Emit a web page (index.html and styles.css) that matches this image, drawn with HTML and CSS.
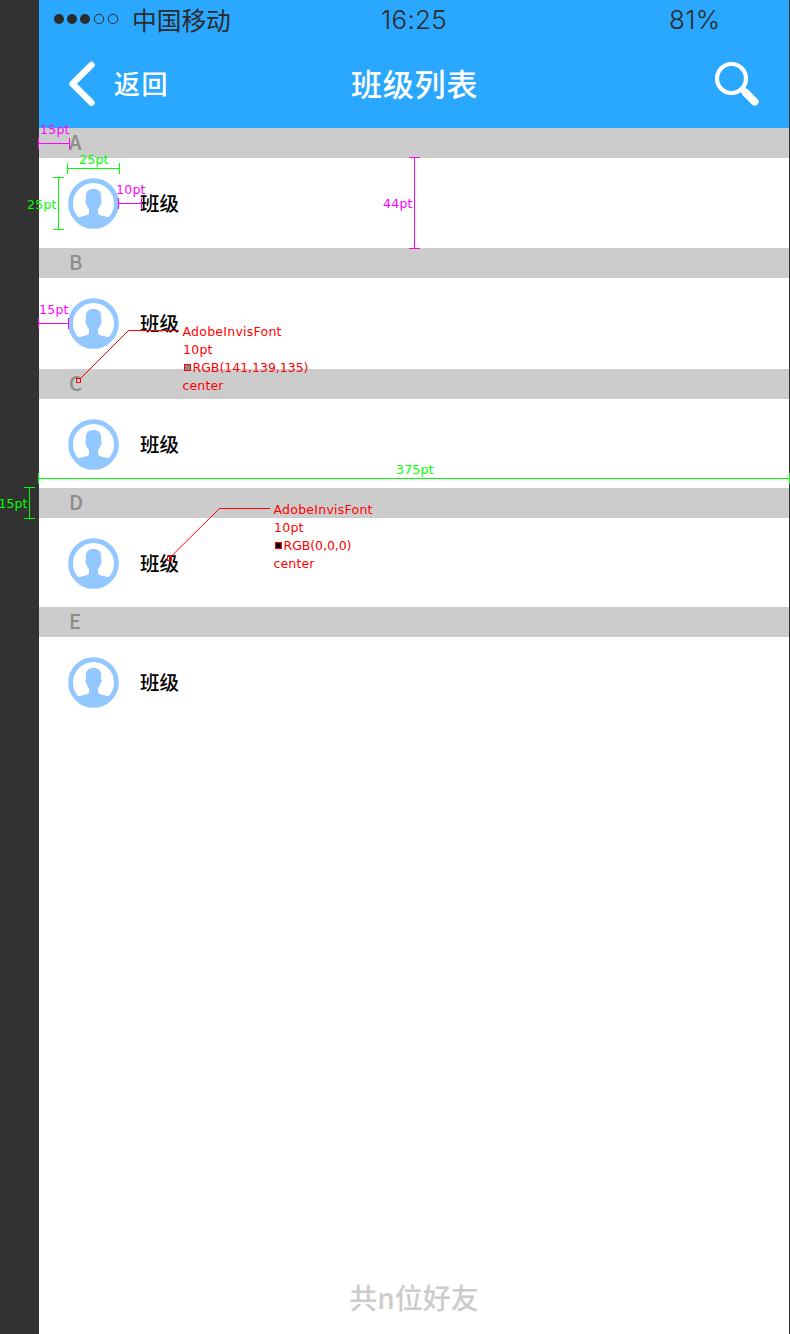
FILE: index.html
```html
<!DOCTYPE html>
<html lang="zh-CN">
<head>
<meta charset="utf-8">
<title>班级列表</title>
<link rel="stylesheet" href="styles.css">
</head>
<body>
<svg class="defs" width="0" height="0" aria-hidden="true">
  <symbol id="avatar" viewBox="0.500 0.500 52 52">
    <circle cx="26" cy="26" r="22.900" fill="#fff" stroke="#93c7ff" stroke-width="4.800"/>
    <path fill="#93c7ff" d="M26 11.500c-5 0-8 3-7.600 7.500v3.600c-.9.2-.8 3.600.5 4 .5 2.500 1.600 4 2.600 5V36c-.5 2-6.500 2.900-12 4.300A23 23 0 0 0 42.500 40.300C37 38.900 31 38 30.500 36v-4.400c1-1 2.100-2.500 2.600-5 1.300-.4 1.400-3.800.5-4V19c.4-4.500-2.600-7.500-7.600-7.500Z"/>
    <path fill="#93c7ff" d="M9.500 40.200Q26 36 42.500 40.200 36 49 26 49T9.500 40.200Z"/>
  </symbol>
</svg>
<main class="screen">
  <header class="header">
    <div class="status">
      <svg class="signal" width="66" height="14" viewBox="0 0 66 14">
        <g fill="#2b2b2b"><circle cx="6" cy="7" r="5"/><circle cx="19" cy="7" r="5"/><circle cx="32" cy="7" r="5"/></g>
        <g fill="none" stroke="#2b2b2b"><circle cx="46" cy="7" r="4.700"/><circle cx="60" cy="7" r="4.700"/></g>
      </svg>
      <span class="carrier">中国移动</span>
      <span class="time">16:25</span>
      <span class="battery">81%</span>
    </div>
    <nav class="navbar">
      <svg class="back-icon" width="28" height="46" viewBox="0 0 28 46"><path d="M23.500 4 4.500 22.800l19 19" fill="none" stroke="#fff" stroke-width="6.400" stroke-linecap="round" stroke-linejoin="round"/></svg>
      <span class="back">返回</span>
      <h1 class="title">班级列表</h1>
      <svg class="search-icon" width="48" height="48" viewBox="0 0 48 48"><g fill="none" stroke="#fff"><circle cx="18.500" cy="18.500" r="14.500" stroke-width="4.200"/><path d="m29 29 4 4" stroke-width="6.500"/><path d="m33 33 8.700 8.700" stroke-width="7.800" stroke-linecap="round"/></g></svg>
    </nav>
  </header>
  <section class="group"><h2 class="letter">A</h2><div class="row"><svg class="avatar"><use href="#avatar"/></svg><span>班级</span></div></section>
  <section class="group tall"><h2 class="letter">B</h2><div class="row"><svg class="avatar"><use href="#avatar"/></svg><span>班级</span></div></section>
  <section class="group short"><h2 class="letter">C</h2><div class="row"><svg class="avatar"><use href="#avatar"/></svg><span>班级</span></div></section>
  <section class="group short"><h2 class="letter">D</h2><div class="row"><svg class="avatar"><use href="#avatar"/></svg><span>班级</span></div></section>
  <section class="group"><h2 class="letter">E</h2><div class="row"><svg class="avatar"><use href="#avatar"/></svg><span>班级</span></div></section>
  <footer class="footer">共n位好友</footer>
</main>
<svg class="notes" width="790" height="1334" viewBox="0 0 790 1334">
  <g class="magenta">
    <path d="M38.500 138v11M38.500 143.500h31M69.500 138v11M118.500 198v11M118.500 203.500h23M141.500 198v11M38.500 318v11M38.500 323.500h30M68.500 318v11M409 157.500h11M414.500 157.500v91M409 248.500h11"/>
    <text x="40" y="134" textLength="29.500">15pt</text>
    <text x="116" y="194" textLength="29.500">10pt</text>
    <text x="39" y="314" textLength="29.500">15pt</text>
    <text x="383" y="208" textLength="29.500">44pt</text>
  </g>
  <g class="green">
    <path d="M67.500 163v11M67.500 168.500h52M119.500 163v11M53 177.500h11M58.500 177.500v52M53 229.500h11M38.500 473v11M38.500 478.500h751M789.500 473v11M24 487.500h11M29.500 487.500v31M24 518.500h11"/>
    <text x="79" y="164" textLength="29.500">25pt</text>
    <text x="27" y="209" textLength="29.500">25pt</text>
    <text x="396" y="474" textLength="37.500">375pt</text>
    <text x="-1.500" y="508" textLength="29">15pt</text>
  </g>
  <g class="red">
    <path d="M80 379 128.500 330.500H179M171 556.500 219.500 508.500H270"/>
    <rect x="76.500" y="378.500" width="4" height="4"/>
    <rect x="167.500" y="556.500" width="4" height="4"/>
    <rect x="184.500" y="364.500" width="6" height="6" fill="#8d8b87"/>
    <rect x="275.500" y="542.500" width="6" height="6" fill="#000"/>
    <text x="182.500" y="336" textLength="99">AdobeInvisFont</text>
    <text x="183" y="354" textLength="29.500">10pt</text>
    <text x="192.500" y="372" textLength="116">RGB(141,139,135)</text>
    <text x="182.500" y="390" textLength="41">center</text>
    <text x="273.500" y="514" textLength="99">AdobeInvisFont</text>
    <text x="274" y="532" textLength="29.500">10pt</text>
    <text x="283.500" y="550" textLength="68">RGB(0,0,0)</text>
    <text x="273.500" y="568" textLength="41">center</text>
  </g>
</svg>
</body>
</html>
```
FILE: styles.css
```css
* { box-sizing: border-box; }
body {
  margin: 0;
  position: relative;
  width: 790px;
  height: 1334px;
  overflow: hidden;
  padding: 0 1px 0 39px;
  background: #323232;
  font-family: "Noto Sans CJK SC", sans-serif;
}
.defs { display: none; }
.screen {
  display: flex;
  flex-direction: column;
  width: 750px;
  height: 1334px;
  background: #fff;
}
.header { height: 128px; background: #2aa8ff; }
.status {
  display: grid;
  grid-template-columns: 79px 249px 288px auto;
  align-items: center;
  height: 40px;
  padding-left: 14px;
  color: #2b2b2b;
  white-space: nowrap;
}
.signal { margin-top: -2px; }
.carrier { margin-top: -2px; font-size: 24.700px; line-height: 40px; }
.time, .battery {
  font-family: Inter, "Liberation Sans", sans-serif;
  font-size: 26px;
  font-weight: 300;
  line-height: 40px;
  letter-spacing: 0.300px;
}
.navbar {
  display: grid;
  grid-template-columns: 46px 237px 362px 48px;
  align-items: center;
  height: 88px;
  padding-left: 29px;
  color: #fff;
}
.back { margin-top: -3px; font-size: 26px; font-weight: 500; letter-spacing: 1.500px; }
.title { margin: -3px 0 0; font-size: 31px; font-weight: 500; letter-spacing: 0.800px; }
.letter {
  margin: 0;
  height: 30px;
  padding-left: 30px;
  background: #ccc;
  color: #8d8b87;
  font-size: 20px;
  font-weight: 500;
  line-height: 28px;
}
.row {
  display: flex;
  gap: 20px;
  height: 90px;
  padding: 20px 0 0 29px;
  color: #000;
  font-size: 19.500px;
  font-weight: 500;
  line-height: 49px;
}
.tall .row { height: 91px; }
.short .row { height: 89px; }
.avatar { width: 52px; height: 52px; }
.footer {
  margin-top: auto;
  height: 73px;
  text-align: center;
  color: #ccc;
  font-size: 28px;
  font-weight: 500;
  line-height: 72px;
}
.notes {
  position: absolute;
  inset: 0;
  font-family: "DejaVu Sans", sans-serif;
  font-size: 12.500px;
}
.notes path, .notes rect { stroke-width: 1; }
.notes path { fill: none; }
.magenta { fill: #f0f; }
.magenta path { stroke: #f0f; }
.green { fill: #0f0; }
.green path { stroke: #0f0; }
.red { fill: #f00; }
.red path, .red rect { stroke: #f00; }
.red rect:nth-of-type(-n+2) { fill: none; }
```
